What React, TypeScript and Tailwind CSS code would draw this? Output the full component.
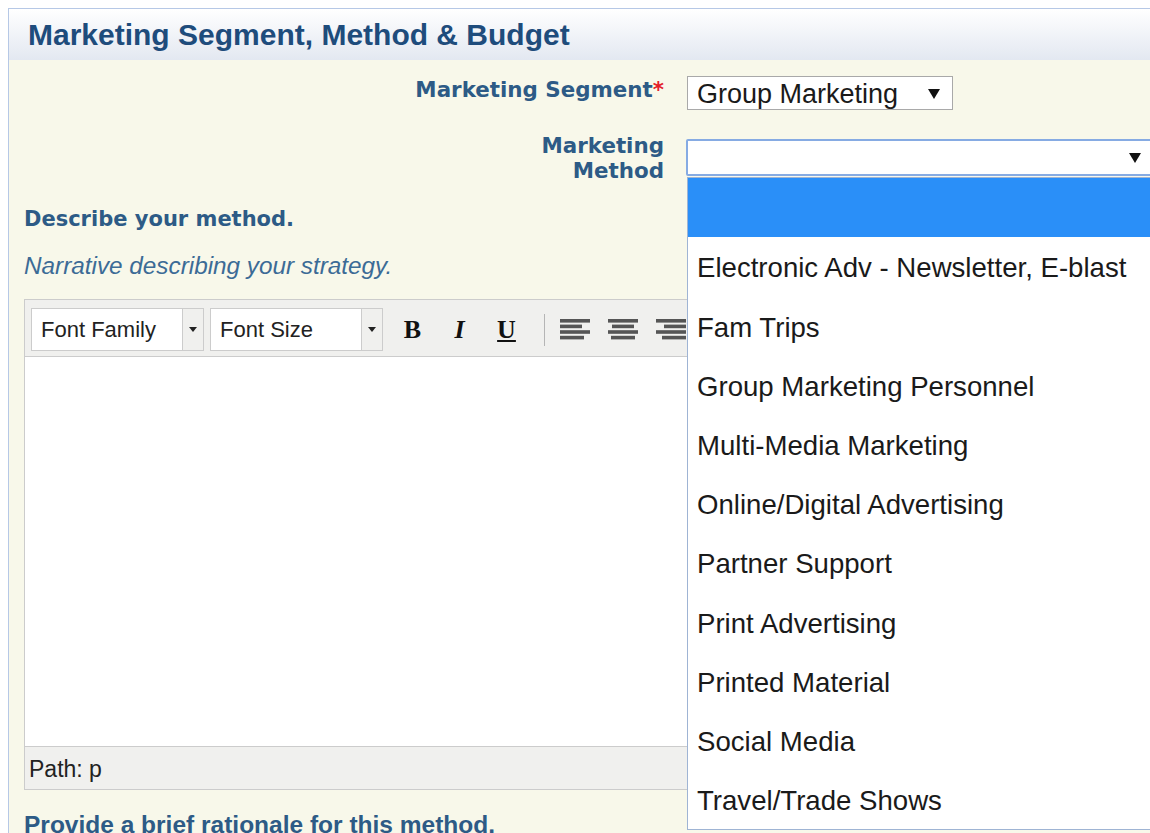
import type { ReactNode } from 'react';

const methods = [
  'Electronic Adv - Newsletter, E-blast',
  'Fam Trips',
  'Group Marketing Personnel',
  'Multi-Media Marketing',
  'Online/Digital Advertising',
  'Partner Support',
  'Print Advertising',
  'Printed Material',
  'Social Media',
  'Travel/Trade Shows',
];

function Caret({ className = '' }: { className?: string }) {
  return (
    <svg width="12" height="10" viewBox="0 0 12 10" className={className}>
      <polygon points="0,0 12,0 6,10" fill="#111" />
    </svg>
  );
}

function FieldLabel({ children }: { children: ReactNode }) {
  return (
    <label className="text-right font-['DejaVu_Sans',Verdana,sans-serif] text-[21.4px] font-bold leading-[25px] text-[#2d5b86]">
      {children}
    </label>
  );
}

function ToolbarSelect({ label }: { label: string }) {
  return (
    <div className="flex">
      <div className="flex h-[43px] w-[152px] items-center border border-[#cccccc] bg-white pl-[9px] text-[22px] text-[#222]">
        {label}
      </div>
      <div className="flex h-[43px] w-[21px] items-center justify-center border border-l-0 border-[#cccccc] bg-[#f0f0ee]">
        <svg width="8" height="5" viewBox="0 0 8 5">
          <polygon points="0,0 8,0 4,5" fill="#222" />
        </svg>
      </div>
    </div>
  );
}

// classic editor alignment glyphs: four heavy grey bars
function AlignIcon({ mode }: { mode: 'left' | 'center' | 'right' }) {
  const rows = [30, 22, 30, 24];
  return (
    <svg width="30" height="21" viewBox="0 0 30 21">
      {rows.map((w, i) => {
        const x = mode === 'left' ? 0 : mode === 'center' ? (30 - w) / 2 : 30 - w;
        return <rect key={i} x={x} y={i * 5.6} width={w} height={3.6} fill="#555" />;
      })}
    </svg>
  );
}

function Editor() {
  return (
    <div className="mt-[19px] w-[1120px] border border-[#cccccc]">
      <div className="flex h-[57px] items-center gap-[6px] border-b border-[#cccccc] bg-[#f0f0ee] pl-[6px] pt-[3px]">
        <ToolbarSelect label="Font Family" />
        <ToolbarSelect label="Font Size" />
        <div className="flex items-center font-['Liberation_Serif','Times_New_Roman',serif] text-[26px] font-bold text-[#111]">
          <span className="flex w-[47px] justify-center">B</span>
          <span className="flex w-[47px] justify-center italic">I</span>
          <span className="flex w-[47px] justify-center underline decoration-2 underline-offset-2">U</span>
        </div>
        <div className="ml-[8px] h-[32px] w-px bg-[#b5b5b5]" />
        <div className="flex items-center">
          <span className="flex w-[48px] justify-center"><AlignIcon mode="left" /></span>
          <span className="flex w-[48px] justify-center"><AlignIcon mode="center" /></span>
          <span className="flex w-[48px] justify-center"><AlignIcon mode="right" /></span>
        </div>
      </div>
      <div className="h-[389px] bg-white" />
      <div className="flex h-[43px] items-center border-t border-[#cccccc] bg-[#f0f0ee] pl-[4px] pt-[2px] text-[23px] text-[#222]">
        Path: p
      </div>
    </div>
  );
}

function MethodList() {
  return (
    <ul className="absolute left-[687px] top-[177px] w-[480px] border border-[#9fb4d4] bg-white text-[27.6px] text-[#1a1a1a]">
      <li className="h-[59px] bg-[#2a8ff8]" />
      {methods.map((m) => (
        <li key={m} className="flex h-[59.2px] items-center pl-[9px] pt-[3px]">
          {m}
        </li>
      ))}
    </ul>
  );
}

export default function App() {
  return (
    <div className="relative h-[833px] w-[1150px] overflow-hidden bg-white font-['Liberation_Sans',Arial,sans-serif]">
      <section className="ml-2 mt-2 w-[1170px] border border-[#b6c8e6] bg-[#f8f8ea]">
        <header className="flex h-[51px] items-center bg-gradient-to-b from-white to-[#e3e8f1] pl-[19px]">
          <h2 className="text-[30px] font-bold text-[#1e4c7c]">Marketing Segment, Method &amp; Budget</h2>
        </header>

        <div className="pl-[15px] pt-[16px]">
          <div className="grid grid-cols-[640px_1fr] items-start gap-x-[22px] gap-y-[23px]">
            <FieldLabel>
              <span className="relative top-px">
                Marketing Segment<span className="text-[#e4202a]">*</span>
              </span>
            </FieldLabel>
            <div className="ml-px flex h-[34px] w-[266px] items-center justify-between border border-[#a9a9a9] bg-white pl-[9px] pr-[12px] pt-[2px] text-[27px] text-[#1a1a1a]">
              Group Marketing
              <Caret />
            </div>

            <FieldLabel>
              Marketing
              <br />
              Method
            </FieldLabel>
            <div className="mt-[6px] flex h-[37px] w-[470px] items-center justify-end rounded-[2px] border-2 border-[#86abe3] bg-white pr-[13px]">
              <Caret />
            </div>
          </div>

          <p className="mt-[24px] font-['DejaVu_Sans',Verdana,sans-serif] text-[21px] font-bold leading-[25px] text-[#2d5b86]">
            Describe your method.
          </p>
          <p className="mt-[20px] text-[24.3px] italic leading-[28px] text-[#3c6b96]">
            Narrative describing your strategy.
          </p>

          <Editor />

          <p className="mt-[21px] pb-6 text-[24.5px] font-bold leading-[28px] text-[#2d5b86]">
            Provide a brief rationale for this method.
          </p>
        </div>
      </section>

      <MethodList />
    </div>
  );
}
